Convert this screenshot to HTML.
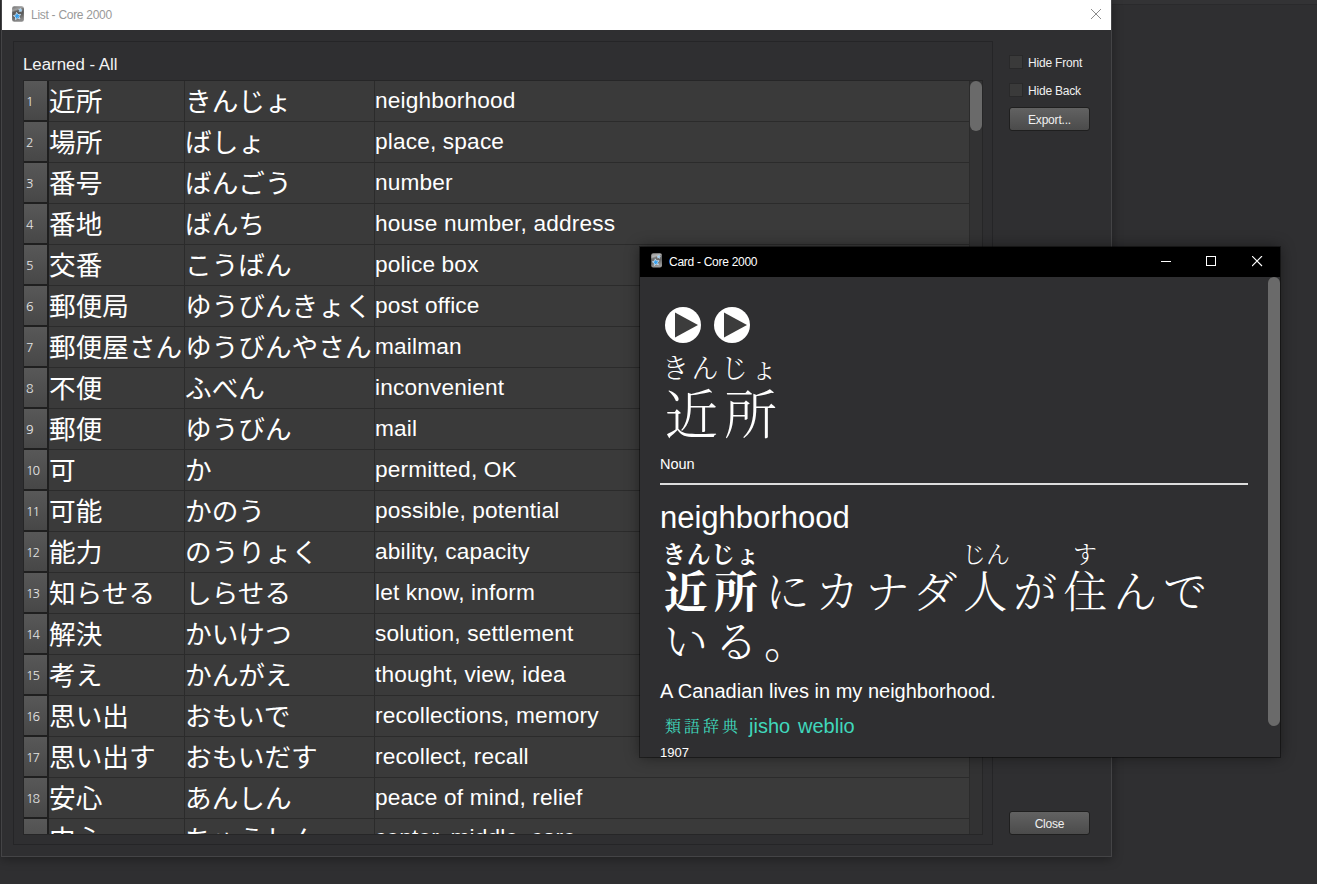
<!DOCTYPE html>
<html lang="ja">
<head>
<meta charset="utf-8">
<title>List - Core 2000</title>
<style>
*{box-sizing:border-box;margin:0;padding:0}
html,body{width:1317px;height:884px;overflow:hidden;background:#2f2f31}
body{position:relative;font-family:"Liberation Sans","Noto Sans CJK JP",sans-serif;color:#fff}
.abs{position:absolute}
/* ---------- list window ---------- */
#lw{position:absolute;left:1px;top:0;width:1111px;height:857px;background:#2f2f31;border:1px solid #444446;border-top:0;box-shadow:0 2px 10px rgba(0,0,0,.35)}
#lt{position:absolute;left:2px;top:0;width:1109px;height:30px;background:#fff}
#lt .tx{position:absolute;left:29px;top:8px;font-size:12px;line-height:14px;color:#999;white-space:nowrap;letter-spacing:-0.28px}
.ico{position:absolute}
#gb{position:absolute;left:13px;top:41px;width:980px;height:804px;border:1px solid #252527}
#lbl{position:absolute;left:23px;top:54.5px;font-size:16.85px;line-height:20px;white-space:nowrap;color:#f4f4f4}
#tb{position:absolute;left:23px;top:80px;width:960px;height:755px;border:1px solid #262627;background:#323233;overflow:hidden}
.row{position:absolute;left:0;width:946px;height:41px}
.rh{position:absolute;left:0;top:0;width:23px;height:39px;background:linear-gradient(#585858,#474747);font-family:"NanumGothic","Liberation Sans",sans-serif;font-size:12.5px;line-height:41px;letter-spacing:-1.2px;color:#e4e4e4;padding-left:2px;white-space:nowrap;overflow:hidden}
.rhb{position:absolute;left:0;top:39px;width:25px;height:2px;background:#1f1f1f}
.rhr{position:absolute;left:23px;top:0;width:2px;height:41px;background:#1f1f1f}
.cells{position:absolute;left:25px;top:0;width:921px;height:40px;background:#3a3a3a}
.gl{position:absolute;left:25px;top:40px;width:921px;height:1px;background:#2b2b2b}
.c{position:absolute;top:0;height:40px;white-space:nowrap;overflow:visible}
.c1{left:-1px;width:136px}
.c2{left:135px;width:190px}
.c3{left:325px;width:596px}
.jp{font-family:"Liberation Sans","Noto Sans CJK JP",sans-serif;font-size:26.67px;line-height:40px;padding-left:1px;padding-top:1px}
.en{font-size:22.67px;line-height:38px;letter-spacing:0.16px;padding-left:1px;padding-top:0}
.vl{position:absolute;top:0;width:1px;height:755px;background:#2b2b2b}
#sbh{position:absolute;left:970px;top:81px;width:12px;height:50px;border-radius:6px;background:#6a6a6a}
.cb{position:absolute;left:1009px;width:14px;height:14px;background:#3a3a3a;border:1px solid #29292a}
.cbl{position:absolute;left:1028px;margin-top:1px;letter-spacing:-0.2px;font-size:12px;line-height:14px;white-space:nowrap;color:#f0f0f0}
.btn{position:absolute;left:1009px;width:81px;height:24px;border:1px solid #1f1f1f;border-radius:3px;background:linear-gradient(#626262,#4b4b4b);font-size:12px;line-height:25px;letter-spacing:-0.2px;text-align:center;color:#f0f0f0}
/* ---------- card window ---------- */
#cw{position:absolute;left:640px;top:247px;width:640px;height:510px;background:#2f2f31;box-shadow:0 0 14px rgba(0,0,0,.45),0 0 0 1px rgba(0,0,0,.4);overflow:hidden}
#ct{position:absolute;left:0;top:0;width:640px;height:30px;background:#000}
#ct .tx{position:absolute;left:29px;top:8px;font-size:12px;line-height:14px;color:#fff;white-space:nowrap;letter-spacing:-0.28px}
#csb{position:absolute;left:628px;top:30px;width:12px;height:449px;border-radius:6px;background:#6a6a6a}
.kai{font-family:"Noto Serif CJK JP","Noto Serif CJK SC",serif}
.play{position:absolute;top:60px;width:36px;height:36px}
</style>
</head>
<body>
<div class="abs" style="left:1112px;top:0;width:205px;height:4px;background:#333335"></div><div class="abs" style="left:1112px;top:4px;width:205px;height:1px;background:#2a2a2c"></div>
<div id="lw"></div>
<div id="lt">
  <svg class="ico" style="left:10px;top:6px" width="12" height="16" viewBox="0 0 12 16"><defs><linearGradient id="ig1" x1="0" y1="0" x2="0.25" y2="1"><stop offset="0" stop-color="#6e6e6e"/><stop offset="0.28" stop-color="#a0a0a0"/><stop offset="0.4" stop-color="#5e5e5e"/><stop offset="0.62" stop-color="#5a5a5a"/><stop offset="1" stop-color="#8a8a8a"/></linearGradient></defs><rect x="0.1" y="0.2" width="11.8" height="15.6" rx="2.2" fill="url(#ig1)"/><polygon points="4.52,6.36 6.03,8.49 8.64,8.37 7.08,10.46 8.01,12.91 5.53,12.07 3.49,13.71 3.52,11.09 1.34,9.66 3.83,8.88" fill="#359fee" stroke="#e6f3fd" stroke-width="0.7" stroke-linejoin="round"/><polygon points="8.75,2.23 9.12,3.51 10.38,3.92 9.28,4.67 9.28,6.00 8.23,5.18 6.96,5.59 7.41,4.34 6.63,3.26 7.96,3.30" fill="#8fcdf8" stroke="#e8f5ff" stroke-width="0.4" stroke-linejoin="round"/></svg>
  <div class="tx">List - Core 2000</div>
  <svg class="abs" style="left:1089px;top:9px" width="10" height="10" viewBox="0 0 10 10"><path d="M0 0L10 10M10 0L0 10" stroke="#8c8c8c" stroke-width="1" fill="none"/></svg>
</div>
<div id="gb"></div>
<div id="lbl">Learned - All</div>
<div id="tb">
<div class="row" style="top:0px"><div class="rh">1</div><div class="rhb"></div><div class="rhr"></div><div class="cells"><div class="c c1 jp">近所</div><div class="c c2 jp">きんじょ</div><div class="c c3 en">neighborhood</div></div><div class="gl"></div></div>
<div class="row" style="top:41px"><div class="rh">2</div><div class="rhb"></div><div class="rhr"></div><div class="cells"><div class="c c1 jp">場所</div><div class="c c2 jp">ばしょ</div><div class="c c3 en">place, space</div></div><div class="gl"></div></div>
<div class="row" style="top:82px"><div class="rh">3</div><div class="rhb"></div><div class="rhr"></div><div class="cells"><div class="c c1 jp">番号</div><div class="c c2 jp">ばんごう</div><div class="c c3 en">number</div></div><div class="gl"></div></div>
<div class="row" style="top:123px"><div class="rh">4</div><div class="rhb"></div><div class="rhr"></div><div class="cells"><div class="c c1 jp">番地</div><div class="c c2 jp">ばんち</div><div class="c c3 en">house number, address</div></div><div class="gl"></div></div>
<div class="row" style="top:164px"><div class="rh">5</div><div class="rhb"></div><div class="rhr"></div><div class="cells"><div class="c c1 jp">交番</div><div class="c c2 jp">こうばん</div><div class="c c3 en">police box</div></div><div class="gl"></div></div>
<div class="row" style="top:205px"><div class="rh">6</div><div class="rhb"></div><div class="rhr"></div><div class="cells"><div class="c c1 jp">郵便局</div><div class="c c2 jp">ゆうびんきょく</div><div class="c c3 en">post office</div></div><div class="gl"></div></div>
<div class="row" style="top:246px"><div class="rh">7</div><div class="rhb"></div><div class="rhr"></div><div class="cells"><div class="c c1 jp">郵便屋さん</div><div class="c c2 jp">ゆうびんやさん</div><div class="c c3 en">mailman</div></div><div class="gl"></div></div>
<div class="row" style="top:287px"><div class="rh">8</div><div class="rhb"></div><div class="rhr"></div><div class="cells"><div class="c c1 jp">不便</div><div class="c c2 jp">ふべん</div><div class="c c3 en">inconvenient</div></div><div class="gl"></div></div>
<div class="row" style="top:328px"><div class="rh">9</div><div class="rhb"></div><div class="rhr"></div><div class="cells"><div class="c c1 jp">郵便</div><div class="c c2 jp">ゆうびん</div><div class="c c3 en">mail</div></div><div class="gl"></div></div>
<div class="row" style="top:369px"><div class="rh">10</div><div class="rhb"></div><div class="rhr"></div><div class="cells"><div class="c c1 jp">可</div><div class="c c2 jp">か</div><div class="c c3 en">permitted, OK</div></div><div class="gl"></div></div>
<div class="row" style="top:410px"><div class="rh">11</div><div class="rhb"></div><div class="rhr"></div><div class="cells"><div class="c c1 jp">可能</div><div class="c c2 jp">かのう</div><div class="c c3 en">possible, potential</div></div><div class="gl"></div></div>
<div class="row" style="top:451px"><div class="rh">12</div><div class="rhb"></div><div class="rhr"></div><div class="cells"><div class="c c1 jp">能力</div><div class="c c2 jp">のうりょく</div><div class="c c3 en">ability, capacity</div></div><div class="gl"></div></div>
<div class="row" style="top:492px"><div class="rh">13</div><div class="rhb"></div><div class="rhr"></div><div class="cells"><div class="c c1 jp">知らせる</div><div class="c c2 jp">しらせる</div><div class="c c3 en">let know, inform</div></div><div class="gl"></div></div>
<div class="row" style="top:533px"><div class="rh">14</div><div class="rhb"></div><div class="rhr"></div><div class="cells"><div class="c c1 jp">解決</div><div class="c c2 jp">かいけつ</div><div class="c c3 en">solution, settlement</div></div><div class="gl"></div></div>
<div class="row" style="top:574px"><div class="rh">15</div><div class="rhb"></div><div class="rhr"></div><div class="cells"><div class="c c1 jp">考え</div><div class="c c2 jp">かんがえ</div><div class="c c3 en">thought, view, idea</div></div><div class="gl"></div></div>
<div class="row" style="top:615px"><div class="rh">16</div><div class="rhb"></div><div class="rhr"></div><div class="cells"><div class="c c1 jp">思い出</div><div class="c c2 jp">おもいで</div><div class="c c3 en">recollections, memory</div></div><div class="gl"></div></div>
<div class="row" style="top:656px"><div class="rh">17</div><div class="rhb"></div><div class="rhr"></div><div class="cells"><div class="c c1 jp">思い出す</div><div class="c c2 jp">おもいだす</div><div class="c c3 en">recollect, recall</div></div><div class="gl"></div></div>
<div class="row" style="top:697px"><div class="rh">18</div><div class="rhb"></div><div class="rhr"></div><div class="cells"><div class="c c1 jp">安心</div><div class="c c2 jp">あんしん</div><div class="c c3 en">peace of mind, relief</div></div><div class="gl"></div></div>
<div class="row" style="top:738px"><div class="rh">19</div><div class="rhb"></div><div class="rhr"></div><div class="cells"><div class="c c1 jp">中心</div><div class="c c2 jp">ちゅうしん</div><div class="c c3 en" style="top:-1px">center, middle, core</div></div><div class="gl"></div></div>
<div class="vl" style="left:160px"></div>
<div class="vl" style="left:350px"></div>
<div class="vl" style="left:945px"></div>
</div>
<div id="sbh"></div>
<div class="cb" style="top:55px"></div><div class="cbl" style="top:55px">Hide Front</div>
<div class="cb" style="top:83px"></div><div class="cbl" style="top:83px">Hide Back</div>
<div class="btn" style="top:107px">Export...</div>
<div class="btn" style="top:811px">Close</div>

<div id="cw">
  <div id="ct">
    <svg class="ico" style="left:10.6px;top:6.4px" width="11.2" height="14.6" viewBox="0 0 12 16"><defs><linearGradient id="ig2" x1="0" y1="0" x2="0.25" y2="1"><stop offset="0" stop-color="#8f8f8f"/><stop offset="0.28" stop-color="#b4b4b4"/><stop offset="0.4" stop-color="#707070"/><stop offset="0.62" stop-color="#686868"/><stop offset="1" stop-color="#9a9a9a"/></linearGradient></defs><rect x="0.1" y="0.2" width="11.8" height="15.6" rx="2.2" fill="url(#ig2)"/><polygon points="4.52,6.36 6.03,8.49 8.64,8.37 7.08,10.46 8.01,12.91 5.53,12.07 3.49,13.71 3.52,11.09 1.34,9.66 3.83,8.88" fill="#359fee" stroke="#e6f3fd" stroke-width="0.7" stroke-linejoin="round"/><polygon points="8.75,2.23 9.12,3.51 10.38,3.92 9.28,4.67 9.28,6.00 8.23,5.18 6.96,5.59 7.41,4.34 6.63,3.26 7.96,3.30" fill="#8fcdf8" stroke="#e8f5ff" stroke-width="0.4" stroke-linejoin="round"/></svg>
    <div class="tx">Card - Core 2000</div>
    <svg class="abs" style="left:521px;top:9px" width="11" height="11" viewBox="0 0 11 11"><path d="M0 5.5H10" stroke="#fff" stroke-width="1"/></svg>
    <svg class="abs" style="left:566px;top:9px" width="11" height="11" viewBox="0 0 11 11"><rect x="0.5" y="0.5" width="9" height="9" stroke="#fff" stroke-width="1" fill="none"/></svg>
    <svg class="abs" style="left:612px;top:9px" width="11" height="11" viewBox="0 0 11 11"><path d="M0 0L10 10M10 0L0 10" stroke="#fff" stroke-width="1.1" fill="none"/></svg>
  </div>
  <div id="csb"></div>
  <svg class="play" style="left:25px" viewBox="0 0 36 36"><circle cx="18" cy="18" r="18" fill="#fff"/><path d="M10 5.5L33 18L10 30.5z" fill="#3c3c3c"/></svg>
  <svg class="play" style="left:74px" viewBox="0 0 36 36"><circle cx="18" cy="18" r="18" fill="#fff"/><path d="M10 5.5L33 18L10 30.5z" fill="#3c3c3c"/></svg>
  <div class="abs kai" style="left:22px;top:104px;font-size:27px;line-height:32px;white-space:nowrap;font-weight:300;letter-spacing:2.5px">きんじょ</div>
  <div class="abs kai" style="left:25px;top:132px;font-size:53px;line-height:64px;white-space:nowrap;font-weight:300;letter-spacing:6px">近所</div>
  <div class="abs" style="left:20px;top:209px;font-size:14.5px;line-height:16px;white-space:nowrap">Noun</div>
  <div class="abs" style="left:20px;top:236px;width:588px;height:2px;background:#ddd"></div>
  <div class="abs" style="left:20px;top:253px;font-size:31px;line-height:36px;white-space:nowrap">neighborhood</div>
  <div class="abs kai" style="left:22px;top:292px;font-size:24px;line-height:28px;white-space:nowrap;font-weight:700;letter-spacing:0.5px">きんじょ</div>
  <div class="abs kai" style="left:321px;top:292px;width:50px;text-align:center;font-size:24px;line-height:28px;white-space:nowrap;font-weight:300">じん</div>
  <div class="abs kai" style="left:420px;top:292px;width:50px;text-align:center;font-size:24px;line-height:28px;white-space:nowrap;font-weight:300">す</div>
  <div class="abs kai" style="left:24px;top:312px;font-size:44px;line-height:60px;white-space:nowrap;font-weight:300;letter-spacing:6px"><span style="font-weight:700">近所</span><span style="margin-left:1.5px">にカナダ人が住んで</span></div>
  <div class="abs kai" style="left:24px;top:362px;font-size:44px;line-height:60px;white-space:nowrap;font-weight:300;letter-spacing:6px">いる。</div>
  <div class="abs" style="left:20px;top:432px;font-size:20px;line-height:24px;white-space:nowrap">A Canadian lives in my neighborhood.</div>
  <div class="abs kai" style="left:25px;top:467px;font-size:16px;line-height:24px;white-space:nowrap;color:#40d8bc;letter-spacing:3px">類語辞典</div>
  <div class="abs" style="left:109px;top:467px;font-size:20px;line-height:24px;white-space:nowrap;color:#40d8bc">jisho</div>
  <div class="abs" style="left:158px;top:467px;font-size:20px;line-height:24px;white-space:nowrap;color:#40d8bc">weblio</div>
  <div class="abs" style="left:20px;top:499px;font-size:13px;line-height:14px;white-space:nowrap">1907</div>
</div>
</body>
</html>
